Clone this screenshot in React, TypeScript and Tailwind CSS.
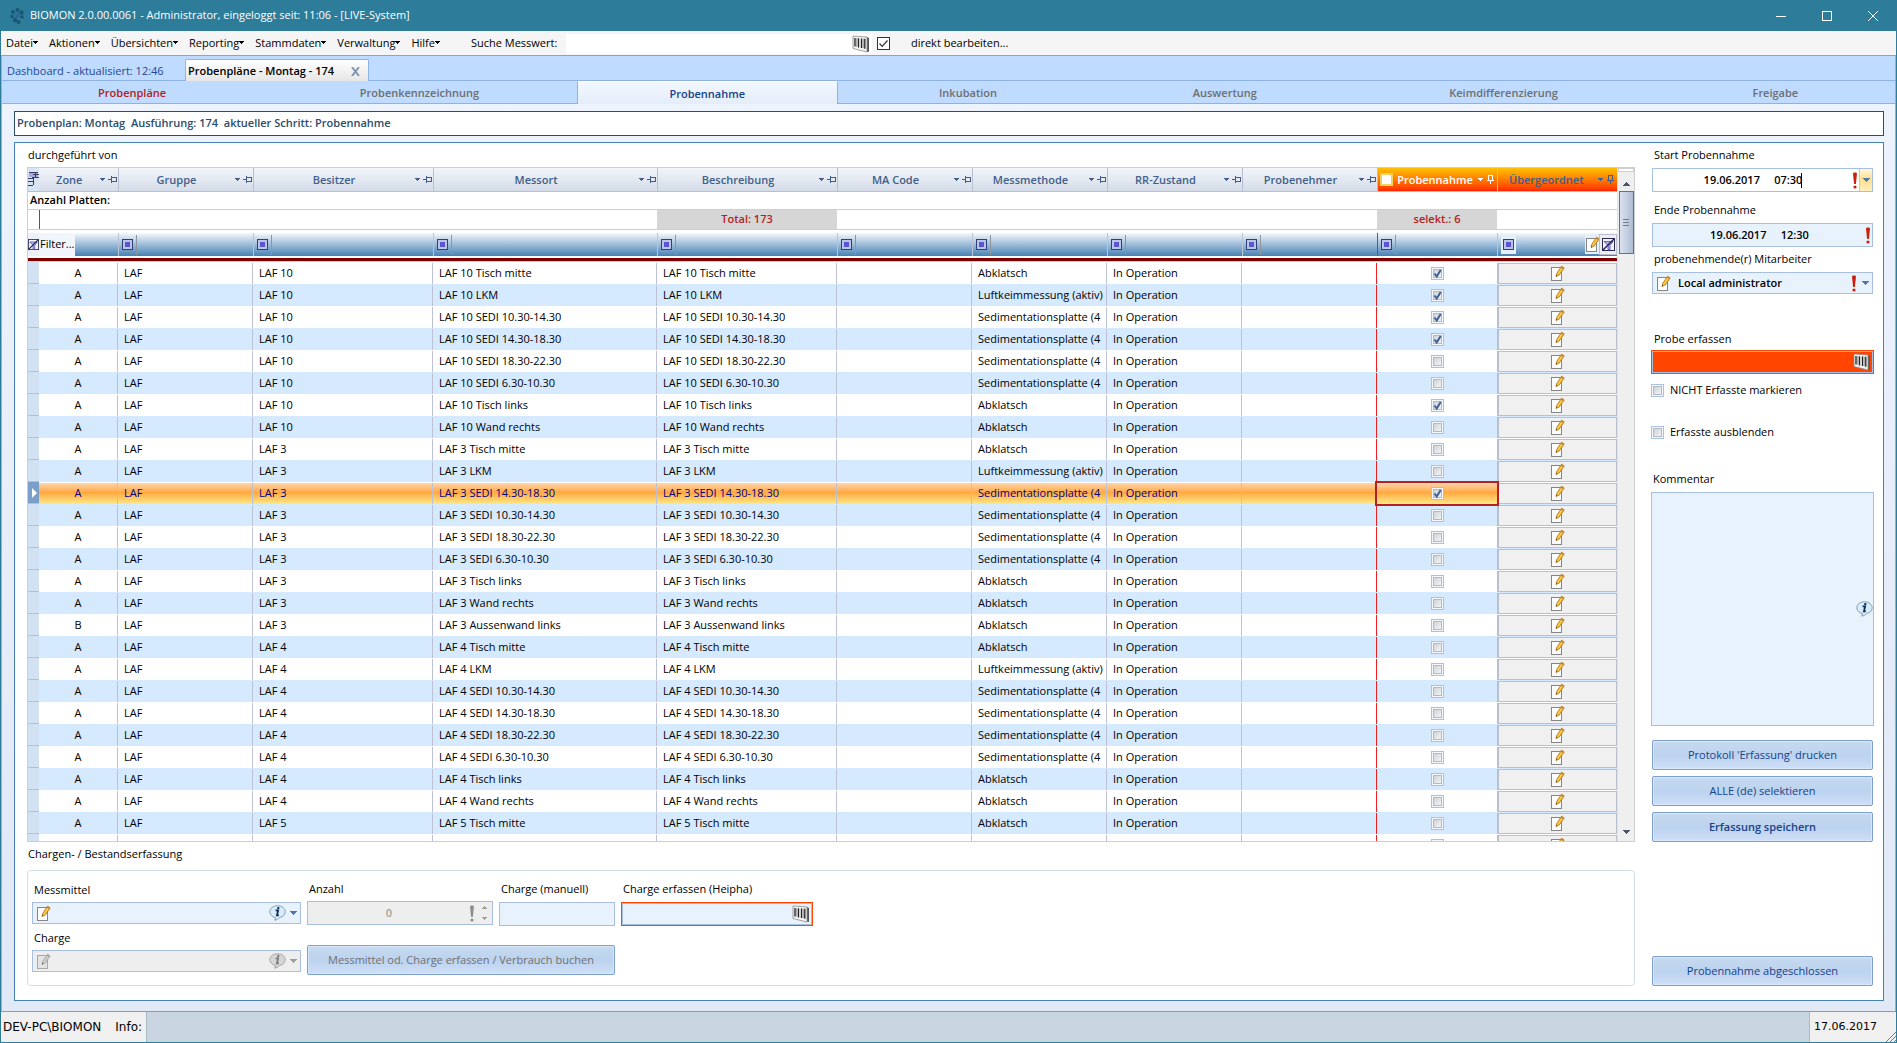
import React, { useState } from 'react';
import clsx from 'clsx';

type Sample = {
  zone: string;
  owner: string;
  place: string;
  method: string;
  checked?: boolean;
};

type StepTab = { label: string; tone: 'done' | 'active' | 'idle' };

const SEDI = 'Sedimentationsplatte (4';
const LKM = 'Luftkeimmessung (aktiv)';
const ABK = 'Abklatsch';

const samples: Sample[] = [
  { zone: 'A', owner: 'LAF 10', place: 'LAF 10 Tisch mitte', method: ABK, checked: true },
  { zone: 'A', owner: 'LAF 10', place: 'LAF 10 LKM', method: LKM, checked: true },
  { zone: 'A', owner: 'LAF 10', place: 'LAF 10 SEDI 10.30-14.30', method: SEDI, checked: true },
  { zone: 'A', owner: 'LAF 10', place: 'LAF 10 SEDI 14.30-18.30', method: SEDI, checked: true },
  { zone: 'A', owner: 'LAF 10', place: 'LAF 10 SEDI 18.30-22.30', method: SEDI },
  { zone: 'A', owner: 'LAF 10', place: 'LAF 10 SEDI 6.30-10.30', method: SEDI },
  { zone: 'A', owner: 'LAF 10', place: 'LAF 10 Tisch links', method: ABK, checked: true },
  { zone: 'A', owner: 'LAF 10', place: 'LAF 10 Wand rechts', method: ABK },
  { zone: 'A', owner: 'LAF 3', place: 'LAF 3 Tisch mitte', method: ABK },
  { zone: 'A', owner: 'LAF 3', place: 'LAF 3 LKM', method: LKM },
  { zone: 'A', owner: 'LAF 3', place: 'LAF 3 SEDI 14.30-18.30', method: SEDI, checked: true },
  { zone: 'A', owner: 'LAF 3', place: 'LAF 3 SEDI 10.30-14.30', method: SEDI },
  { zone: 'A', owner: 'LAF 3', place: 'LAF 3 SEDI 18.30-22.30', method: SEDI },
  { zone: 'A', owner: 'LAF 3', place: 'LAF 3 SEDI 6.30-10.30', method: SEDI },
  { zone: 'A', owner: 'LAF 3', place: 'LAF 3 Tisch links', method: ABK },
  { zone: 'A', owner: 'LAF 3', place: 'LAF 3 Wand rechts', method: ABK },
  { zone: 'B', owner: 'LAF 3', place: 'LAF 3 Aussenwand links', method: ABK },
  { zone: 'A', owner: 'LAF 4', place: 'LAF 4 Tisch mitte', method: ABK },
  { zone: 'A', owner: 'LAF 4', place: 'LAF 4 LKM', method: LKM },
  { zone: 'A', owner: 'LAF 4', place: 'LAF 4 SEDI 10.30-14.30', method: SEDI },
  { zone: 'A', owner: 'LAF 4', place: 'LAF 4 SEDI 14.30-18.30', method: SEDI },
  { zone: 'A', owner: 'LAF 4', place: 'LAF 4 SEDI 18.30-22.30', method: SEDI },
  { zone: 'A', owner: 'LAF 4', place: 'LAF 4 SEDI 6.30-10.30', method: SEDI },
  { zone: 'A', owner: 'LAF 4', place: 'LAF 4 Tisch links', method: ABK },
  { zone: 'A', owner: 'LAF 4', place: 'LAF 4 Wand rechts', method: ABK },
  { zone: 'A', owner: 'LAF 5', place: 'LAF 5 Tisch mitte', method: ABK },
];

const CURRENT_ROW = 10;

const menus = ['Datei', 'Aktionen', 'Übersichten', 'Reporting', 'Stammdaten', 'Verwaltung', 'Hilfe'];

const columns = ['Zone', 'Gruppe', 'Besitzer', 'Messort', 'Beschreibung', 'MA Code', 'Messmethode', 'RR-Zustand', 'Probenehmer'];

const steps: StepTab[] = [
  { label: 'Probenpläne', tone: 'done' },
  { label: 'Probenkennzeichnung', tone: 'idle' },
  { label: 'Probennahme', tone: 'active' },
  { label: 'Inkubation', tone: 'idle' },
  { label: 'Auswertung', tone: 'idle' },
  { label: 'Keimdifferenzierung', tone: 'idle' },
  { label: 'Freigabe', tone: 'idle' },
];

/* ---------- Icons ---------- */

function Caret({ className, up = false }: { className?: string; up?: boolean }) {
  return (
    <svg viewBox="0 0 8 4" className={clsx('shrink-0', className)} shapeRendering="crispEdges" aria-hidden="true">
      <path d={up ? 'M0 4h8L4 0z' : 'M0 0h8L4 4z'} fill="currentColor" />
    </svg>
  );
}

function PinIcon({ upright = false }: { upright?: boolean }) {
  return (
    <svg viewBox="0 0 9 9" className="h-[9px] w-[9px] shrink-0" fill="none" stroke="currentColor" shapeRendering="crispEdges" aria-hidden="true">
      {upright ? <path d="M2.5 0v5M6.5 0v5M2 .5h5M1 5.5h7M4.5 5v4" /> : <path d="M0 4.5h3M3.5 1v7M3.5 2.5h5M8.5 2v5M3.5 6.5h5" />}
    </svg>
  );
}

function EditIcon({ muted = false }: { muted?: boolean }) {
  return (
    <svg viewBox="0 0 15 17" className="h-[17px] w-[15px] shrink-0" aria-hidden="true">
      <rect x="1.5" y="2.5" width="10" height="13" fill={muted ? '#e4e4e4' : '#fdfdfd'} stroke={muted ? '#a8a8a8' : '#858585'} />
      <path d="M6 11.5l.8-3.2L11.6 1.2l2.6 1.7-4.9 7z" fill={muted ? '#cfcfcf' : '#fbc93d'} stroke={muted ? '#9b9b9b' : '#a86a10'} strokeWidth=".8" />
      <path d="M11.6 1.2l2.6 1.7-1 1.4-2.5-1.8z" fill={muted ? '#aaa' : '#c88a3a'} />
      <path d="M6 11.5l.3-1.4 1 .7z" fill="#444" />
    </svg>
  );
}

function BarcodeIcon() {
  return (
    <svg viewBox="0 0 18 18" className="h-[18px] w-[18px] shrink-0" aria-hidden="true">
      <path d="M15 2l2 1v14l-2-.5z" fill="#555" />
      <path d="M1 1l14 1v15L1 13.5z" fill="#f4f4f4" stroke="#8b8b8b" strokeWidth=".8" />
      <path d="M3 3v8.5M6.5 3.2v9.2M9.5 3.4v9.6M12.8 3.8v10" stroke="#222" strokeWidth="1.3" />
      <path d="M4.8 3.2v8.500M11.2 3.6v9.600" stroke="#777" strokeWidth=".8" />
    </svg>
  );
}

function InfoIcon({ muted = false }: { muted?: boolean }) {
  return (
    <svg viewBox="0 0 17 16" className="h-4 w-[17px] shrink-0" aria-hidden="true">
      <path
        d="M8.5 .8C4.2 .8 .8 3.4 .8 6.7c0 3.1 2.8 5.3 5.7 5.8L5.8 15.2c1.9-.4 3.6-1.3 4.9-2.7 3.4-.7 5.5-3 5.5-5.8C16.2 3.4 12.8 .8 8.5 .8z"
        fill={muted ? '#d6d6d6' : '#d4effb'}
        stroke={muted ? '#a0a0a0' : '#7d93a8'}
        strokeWidth=".9"
      />
      <path d="M6.6 5.4h2.500L8 10.4h1.8" fill="none" stroke={muted ? '#777' : '#17265a'} strokeWidth="1.8" />
      <circle cx="9.3" cy="3.1" r="1.2" fill={muted ? '#777' : '#17265a'} />
    </svg>
  );
}

function RequiredMark({ muted = false }: { muted?: boolean }) {
  return (
    <svg viewBox="0 0 4 17" className="h-[17px] w-1 shrink-0" aria-hidden="true">
      <path d="M0 1.5C0 0 4 0 4 1.5L2.9 12H1.1z" fill={muted ? '#8f8f8f' : '#c8210c'} />
      <circle cx="2" cy="15" r="1.6" fill={muted ? '#8f8f8f' : '#c8210c'} />
    </svg>
  );
}

function FilterClearIcon({ className }: { className: string }) {
  return (
    <svg viewBox="0 0 13 13" className={clsx('shrink-0', className)} fill="none" aria-hidden="true">
      <rect x=".5" y=".5" width="12" height="12" fill="#f4f4fb" stroke="#2a2a5c" />
      <path d="M2 3.5h9L8 7.5V12H6V7.5z" fill="#b3b0ee" stroke="#4a47a8" strokeWidth=".8" />
      <path d="M1 12L12 1" stroke="#1f1f4d" strokeWidth="1.4" />
    </svg>
  );
}

function ColumnChooserIcon() {
  return (
    <svg viewBox="0 0 11 14" className="h-[14px] w-[11px]" fill="none" shapeRendering="crispEdges" aria-hidden="true">
      <rect x="1" y="1" width="9" height="4" fill="#a9a7e6" />
      <path d="M1 .5h9M5 2.5h6M7.5 1v4M0 6.5h6M4 5.5h7M0 9.5h5M0 13.5h5M5.5 6v7" stroke="#3d3d5c" />
    </svg>
  );
}

function FilterMark() {
  return (
    <svg viewBox="0 0 11 11" className="h-[11px] w-[11px]" shapeRendering="crispEdges" aria-hidden="true">
      <rect x=".5" y=".5" width="10" height="10" fill="#b9c4e6" stroke="#2f3f77" />
      <rect x="3" y="3" width="5" height="5" fill="#5a55d0" />
    </svg>
  );
}

function AppLogo() {
  return (
    <svg viewBox="0 0 16 18" className="h-[18px] w-4 shrink-0" fill="#1c5577" aria-hidden="true">
      <circle cx="4" cy="5" r="2" />
      <circle cx="8.5" cy="3" r="2" />
      <circle cx="12.5" cy="5.5" r="2.2" />
      <circle cx="3" cy="9.5" r="1.8" />
      <circle cx="13" cy="10" r="1.8" />
      <circle cx="8.5" cy="8.5" r="2.6" fill="#2b6c94" />
      <circle cx="6" cy="13" r="2.2" />
      <circle cx="9.5" cy="15" r="2" />
    </svg>
  );
}

/* ---------- Controls ---------- */

function CheckBox({ id, label, checked, onChange }: { id?: string; label?: string; checked: boolean; onChange: () => void }) {
  return (
    <span className="relative inline-block h-[13px] w-[13px] shrink-0 align-middle">
      <input
        id={id}
        type="checkbox"
        aria-label={label}
        checked={checked}
        onChange={onChange}
        className="block h-[13px] w-[13px] appearance-none border border-[#a9c2e2] bg-linear-to-br from-[#c4c8ce] to-white shadow-[inset_0_0_0_1px_#f4f7fb,inset_0_0_0_2px_#b4b9c2]"
      />
      {checked && (
        <svg viewBox="0 0 13 13" className="pointer-events-none absolute inset-0 h-[13px] w-[13px]" aria-hidden="true">
          <path d="M3.5 6.5L5.7 9.5L9.7 3" fill="none" stroke="#3f5f96" strokeWidth="2" />
        </svg>
      )}
    </span>
  );
}

function ActionButton({ children, bold, disabled }: { children: React.ReactNode; bold?: boolean; disabled?: boolean }) {
  return (
    <button
      type="button"
      disabled={disabled}
      className={clsx(
        'h-[30px] w-full rounded-[2px] border border-[#7d9fd0] bg-linear-to-b from-[#c6dbf0] from-0% via-[#bcd2ee] via-50% to-[#cfe0f8] text-[11px] shadow-[inset_0_0_0_1px_#d8e8fa]',
        bold && 'font-semibold',
        disabled ? 'text-[#6f7072]' : 'text-[#15428b]',
      )}
    >
      {children}
    </button>
  );
}

function HeaderLabel({ children }: { children: React.ReactNode }) {
  return (
    <div className="flex h-[22px] items-center pt-px pr-px">
      <span className="flex-1 text-center">{children}</span>
      <span className="flex items-center gap-[3px]">
        <Caret className="h-[3px] w-[5px]" />
        <PinIcon />
      </span>
    </div>
  );
}

function SampleGrid() {
  const [picked, setPicked] = useState(() => samples.map(s => Boolean(s.checked)));

  const toggle = (index: number) => {
    setPicked(picked.map((value, i) => (i === index ? !value : value)));
  };

  return (
    <div className="flex min-h-0 flex-1 overflow-hidden border border-[#cfcfcf]">
      <div className="min-w-0 flex-1 overflow-hidden">
        <table className="w-full table-fixed">
          <colgroup>
            <col className="w-[11px]" />
            <col className="w-[79px]" />
            <col className="w-[135px]" />
            <col className="w-[180px]" />
            <col />
            <col className="w-[180px]" />
            <col className="w-[135px]" />
            <col className="w-[135px]" />
            <col className="w-[135px]" />
            <col className="w-[135px]" />
            <col className="w-[120px]" />
            <col className="w-[120px]" />
          </colgroup>
          <thead>
            <tr className="h-[23px] bg-linear-to-b from-[#f2f5fa] to-[#d5dce9] text-[#3f5f8a]">
              <th className="border-b border-[#b9bfcf] bg-[#d6e4f4] p-0">
                <ColumnChooserIcon />
              </th>
              {columns.map(name => (
                <th key={name} className="border-r border-b border-[#b9bfcf] p-0 font-semibold">
                  <HeaderLabel>{name}</HeaderLabel>
                </th>
              ))}
              <th className="border-r border-b border-[#b9bfcf] bg-linear-to-b from-[#ffc000] via-[#ff7a00] to-[#ff2000] p-0 font-semibold text-white">
                <div className="flex h-[22px] items-center gap-[3px] px-[2px] pt-px">
                  <input type="checkbox" aria-label="Alle Probennahmen" className="h-[13px] w-[13px] shrink-0 appearance-none border-2 border-[#f5d060] bg-white" />
                  <span className="flex-1 text-center">Probennahme</span>
                  <Caret className="h-[3px] w-[5px]" />
                  <PinIcon upright />
                </div>
              </th>
              <th className="border-b border-[#b9bfcf] bg-linear-to-b from-[#ffc000] via-[#ff7a00] to-[#ff2000] p-0 font-semibold">
                <div className="flex h-[22px] items-center gap-[3px] pt-px pr-[2px]">
                  <span className="flex-1 text-center">Übergeordnet</span>
                  <Caret className="h-[3px] w-[5px]" />
                  <PinIcon upright />
                </div>
              </th>
            </tr>
            <tr className="h-[18px]">
              <td colSpan={12} className="border-b border-[#cfcfcf] px-[2px] py-0 leading-[16px] font-semibold">
                Anzahl Platten:
              </td>
            </tr>
            <tr className="h-5 leading-[16px] font-semibold text-[#b22222]">
              <td className="border-r border-b border-r-[#e02020] border-b-[#cfcfcf] p-0" />
              <td colSpan={4} className="border-b border-[#cfcfcf] p-0" />
              <td className="border-b border-[#cfcfcf] bg-[#d6d6d6] p-0 text-center">Total: 173</td>
              <td colSpan={4} className="border-b border-[#cfcfcf] p-0" />
              <td className="border-b border-[#cfcfcf] bg-[#d6d6d6] p-0 text-center">selekt.: 6</td>
              <td className="border-b border-[#cfcfcf] p-0" />
            </tr>
            <tr className="h-1">
              <td colSpan={12} className="p-0" />
            </tr>
            <tr className="h-[23px] bg-linear-to-b from-[#f4f9fd] to-[#4682b4]">
              <td className="bg-[#eef0f8] p-0">
                <FilterClearIcon className="h-[13px] w-[11px]" />
              </td>
              <td className="border-r border-[#b9c4d6] p-0">
                <div className="h-[23px] w-9 bg-[#f1f6fc] pl-px leading-[21px]">Filter...</div>
              </td>
              {columns.slice(1).map(name => (
                <td key={name} className={clsx('border-r p-0', name === 'Probenehmer' ? 'border-[#f02020]' : 'border-[#b9c4d6]')}>
                  <div className="grid h-5 w-[18px] place-items-center border-r border-[#8f969e]">
                    <FilterMark />
                  </div>
                </td>
              ))}
              <td className="border-r border-[#b9c4d6] p-0">
                <div className="grid h-5 w-[18px] place-items-center border-r border-[#8f969e]">
                  <FilterMark />
                </div>
              </td>
              <td className="p-0">
                <div className="flex h-[21px] items-center pl-[3px]">
                  <span className="mr-auto grid h-[19px] w-[15px] place-items-center bg-[#e6f0fb]">
                    <FilterMark />
                  </span>
                  <span className="grid h-[19px] w-[14px] place-items-center overflow-hidden bg-[#e6f0fb]">
                    <EditIcon />
                  </span>
                  <button type="button" aria-label="Filter löschen" className="grid h-[21px] w-[18px] place-items-center border border-[#b9bfcf] bg-[#efefef]">
                    <FilterClearIcon className="h-[13px] w-[13px]" />
                  </button>
                </div>
              </td>
            </tr>
            <tr className="h-[2px]">
              <td colSpan={12} className="p-0" />
            </tr>
            <tr className="h-[3px]">
              <td colSpan={12} className="border-b border-[#cfcfcf] bg-[#7b0000] p-0" />
            </tr>
          </thead>
          <tbody>
            {samples.map((s, i) => {
              const current = i === CURRENT_ROW;
              const cell = clsx(
                'h-[21px] overflow-hidden border-r border-[#bcc2d4] leading-[20px] whitespace-nowrap',
                current && 'bg-linear-to-b from-[#ffd5a8] from-0% via-[#ffa940] via-45% to-[#ffe884] text-[#000080]',
              );
              return (
                <tr key={s.place} className={clsx('h-[22px]', i % 2 === 1 ? 'bg-[#d5e9ff]' : 'bg-white')}>
                  <td className={clsx('border-t border-[#b9bfcf] p-0', current ? 'bg-[#7b9fcb]' : 'bg-[#d3e2f3]')}>
                    {current && (
                      <svg viewBox="0 0 5 10" className="ml-[4px] h-[10px] w-[5px]" aria-hidden="true">
                        <path d="M0 0l5 5-5 5z" fill="#fff" />
                      </svg>
                    )}
                  </td>
                  <td className="p-0 pt-px">
                    <div className={clsx(cell, 'text-center')}>{s.zone}</div>
                  </td>
                  <td className="p-0 pt-px">
                    <div className={clsx(cell, 'pl-[6px]')}>LAF</div>
                  </td>
                  <td className="p-0 pt-px">
                    <div className={clsx(cell, 'pl-[6px]')}>{s.owner}</div>
                  </td>
                  <td className="p-0 pt-px">
                    <div className={clsx(cell, 'pl-[6px]')}>{s.place}</div>
                  </td>
                  <td className="p-0 pt-px">
                    <div className={clsx(cell, 'pl-[6px]')}>{s.place}</div>
                  </td>
                  <td className="p-0 pt-px">
                    <div className={cell} />
                  </td>
                  <td className="p-0 pt-px">
                    <div className={clsx(cell, 'pl-[6px]')}>{s.method}</div>
                  </td>
                  <td className="p-0 pt-px">
                    <div className={clsx(cell, 'pl-[6px]')}>In Operation</div>
                  </td>
                  <td className="p-0 pt-px">
                    <div className={clsx(cell, 'border-r-[#f02020]')} />
                  </td>
                  <td className="p-0 pt-px">
                    <div
                      className={clsx(
                        'flex h-[21px] items-center justify-center',
                        current && 'bg-linear-to-b from-[#ffd5a8] from-0% via-[#ffa940] via-45% to-[#ffe884] outline-2 outline-[#b22222]',
                      )}
                    >
                      <CheckBox label={`${s.place} erfasst`} checked={picked[i]} onChange={() => toggle(i)} />
                    </div>
                  </td>
                  <td className="p-0 pt-px">
                    <button type="button" aria-label={`${s.place} bearbeiten`} className="grid h-[21px] w-full place-items-center border border-l-2 border-[#b9bfcf] bg-[#f0f0f0]">
                      <EditIcon />
                    </button>
                  </td>
                </tr>
              );
            })}
            {/* next record, cut off by the viewport */}
            <tr className="h-[22px]">
              <td className="border-t border-[#b9bfcf] bg-[#d3e2f3] p-0" />
              {columns.map(name => (
                <td key={name} className="p-0 pt-px">
                  <div className={clsx('h-[21px] border-r', name === 'Probenehmer' ? 'border-[#f02020]' : 'border-[#bcc2d4]')} />
                </td>
              ))}
              <td className="p-0 pt-px">
                <div className="flex h-[21px] items-center justify-center">
                  <CheckBox label="Nächste Probe" checked={false} onChange={() => undefined} />
                </div>
              </td>
              <td className="p-0 pt-px">
                <div className="grid h-[21px] place-items-center border border-l-2 border-[#b9bfcf] bg-[#f0f0f0]">
                  <EditIcon />
                </div>
              </td>
            </tr>
          </tbody>
        </table>
      </div>

      {/* Scrollbar */}
      <div className="flex w-[17px] flex-col items-center border-l border-[#e2e2e2] bg-[#efefef]">
        <div className="h-1 w-full border border-[#cfcfcf] bg-white" />
        <div className="flex h-[19px] items-center pt-1 text-[#44546e]">
          <Caret up className="h-1 w-[7px]" />
        </div>
        <div className="flex h-[63px] w-[15px] flex-col items-center justify-center gap-[2px] border border-[#5c7399] bg-linear-to-r from-[#d9e2f0] via-[#c5d0e2] to-[#adbcd3]">
          <div className="h-px w-[6px] bg-[#6f7f96]" />
          <div className="h-px w-[6px] bg-[#6f7f96]" />
          <div className="h-px w-[6px] bg-[#6f7f96]" />
        </div>
        <div className="mt-auto pb-[7px] text-[#44546e]">
          <Caret className="h-1 w-[7px]" />
        </div>
      </div>
    </div>
  );
}

function ChargePanel() {
  return (
    <div className="mt-[7px] flex h-[116px] items-start gap-[6px] rounded-[4px] border border-[#d3dfe8] px-1 pt-[10px]">
      <div className="w-[269px]">
        <label htmlFor="messmittel" className="block h-[21px] pl-[2px] leading-[18px]">
          Messmittel
        </label>
        <div className="flex h-[22px] items-center border border-[#a9bfe0] bg-[#e8f2fd] pr-[3px] pl-[3px] text-[#4a78b5]">
          <EditIcon />
          <select id="messmittel" className="h-full min-w-0 flex-1 appearance-none bg-transparent" />
          <InfoIcon />
          <Caret className="ml-1 h-1 w-[7px]" />
        </div>
        <label htmlFor="charge" className="mt-[5px] block h-[21px] pl-[2px] leading-[18px]">
          Charge
        </label>
        <div className="flex h-[22px] items-center border border-[#a9bfe0] bg-[#eeeeee] pr-[3px] pl-[3px] text-[#a19f94]">
          <EditIcon muted />
          <select id="charge" disabled className="h-full min-w-0 flex-1 appearance-none bg-transparent" />
          <InfoIcon muted />
          <Caret className="ml-1 h-1 w-[7px]" />
        </div>
      </div>

      <div className="w-[308px]">
        <div className="flex gap-[6px]">
          <div className="w-[186px]">
            <label htmlFor="anzahl" className="block h-5 pl-[2px] leading-[16px]">
              Anzahl
            </label>
            <div className="flex h-6 items-center border border-[#a9bfe0] bg-[#eeeeee] pr-[5px] text-[#a19f94]">
              <input id="anzahl" defaultValue="0" disabled className="min-w-0 flex-1 bg-transparent text-center font-semibold" />
              <RequiredMark muted />
              <span className="ml-[7px] flex flex-col gap-2">
                <Caret up className="h-[3px] w-[6px]" />
                <Caret className="h-[3px] w-[6px]" />
              </span>
            </div>
          </div>
          <div className="flex-1">
            <label htmlFor="charge-manuell" className="block h-[21px] pl-[2px] leading-[16px]">
              Charge (manuell)
            </label>
            <input id="charge-manuell" className="h-6 w-full border border-[#a9bfe0] bg-[#e8f2fd] px-1" />
          </div>
        </div>
        <div className="mt-[19px]">
          <ActionButton disabled>Messmittel od. Charge erfassen / Verbrauch buchen</ActionButton>
        </div>
      </div>

      <div className="w-[192px]">
        <label htmlFor="charge-heipha" className="block h-[21px] pl-[2px] leading-[16px]">
          Charge erfassen (Heipha)
        </label>
        <div className="flex h-6 items-center border border-[#ff4500] bg-[#e8f2fd] pr-[2px] shadow-[inset_0_0_0_1px_#a9bfe0]">
          <input id="charge-heipha" className="h-full min-w-0 flex-1 bg-transparent px-1" />
          <BarcodeIcon />
        </div>
      </div>
    </div>
  );
}

function SidePanel() {
  const [markMissing, setMarkMissing] = useState(false);
  const [hideDone, setHideDone] = useState(false);

  return (
    <aside className="flex w-[223px] shrink-0 flex-col">
      <label htmlFor="start" className="block h-[22px] pl-[3px] leading-[18px]">
        Start Probennahme
      </label>
      <div className="relative mx-px flex h-6 items-center border border-[#a9bfe0] bg-white font-semibold">
        <input id="start" defaultValue="19.06.2017     07:30" className="min-w-0 flex-1 text-center" />
        <span className="absolute top-1 left-[148px] h-[15px] w-px bg-black" />
        <RequiredMark />
        <button type="button" aria-label="Kalender öffnen" className="ml-[2px] grid h-[22px] w-[13px] place-items-center border-l border-[#d9c98a] bg-linear-to-b from-[#fff6d6] via-[#ffdf8e] to-[#fff0c0] text-[#4a78b5]">
          <Caret className="h-1 w-[7px]" />
        </button>
      </div>

      <label htmlFor="ende" className="mt-[9px] block h-[22px] pl-[3px] leading-[18px]">
        Ende Probennahme
      </label>
      <div className="mx-px flex h-6 items-center border border-[#a9bfe0] bg-[#e8f2fd] pr-[2px] font-semibold">
        <input id="ende" defaultValue="19.06.2017     12:30" className="min-w-0 flex-1 bg-transparent text-center" />
        <RequiredMark />
      </div>

      <label htmlFor="mitarbeiter" className="mt-[3px] block h-[22px] pl-[3px] leading-[18px]">
        probenehmende(r) Mitarbeiter
      </label>
      <div className="mx-px flex h-[22px] items-center border border-[#a9bfe0] bg-[#e8f2fd] pr-[3px] pl-[3px] text-[#4a78b5]">
        <EditIcon />
        <select id="mitarbeiter" className="min-w-0 flex-1 appearance-none bg-transparent pl-[7px] font-semibold text-black">
          <option>Local administrator</option>
        </select>
        <RequiredMark />
        <Caret className="ml-[6px] h-1 w-[7px]" />
      </div>

      <label htmlFor="probe" className="mt-9 block h-5 pl-[3px] leading-[18px]">
        Probe erfassen
      </label>
      <div className="flex h-6 items-center border border-[#ff4500] bg-[#ff4500] pr-[2px] shadow-[inset_0_0_0_1px_#a9bfe0]">
        <input id="probe" className="min-w-0 flex-1 bg-transparent px-1" />
        <BarcodeIcon />
      </div>

      <div className="mt-2 flex h-4 items-center gap-[6px]">
        <CheckBox id="mark-missing" checked={markMissing} onChange={() => setMarkMissing(!markMissing)} />
        <label htmlFor="mark-missing">NICHT Erfasste markieren</label>
      </div>
      <div className="mt-[26px] flex h-4 items-center gap-[6px]">
        <CheckBox id="hide-done" checked={hideDone} onChange={() => setHideDone(!hideDone)} />
        <label htmlFor="hide-done">Erfasste ausblenden</label>
      </div>

      <label htmlFor="kommentar" className="mt-[30px] block h-[22px] pl-[2px] leading-[18px]">
        Kommentar
      </label>
      <div className="relative h-[234px]">
        <textarea id="kommentar" className="block h-full w-full resize-none border border-[#a9bfe0] bg-[#e8f2fd] p-1" />
        <span className="absolute top-1/2 right-px -translate-y-1/2">
          <InfoIcon />
        </span>
      </div>

      <div className="mx-px mt-[14px] flex flex-1 flex-col gap-[6px] pb-[14px]">
        <ActionButton>Protokoll 'Erfassung' drucken</ActionButton>
        <ActionButton>ALLE (de) selektieren</ActionButton>
        <ActionButton bold>Erfassung speichern</ActionButton>
        <div className="mt-auto">
          <ActionButton>Probennahme abgeschlossen</ActionButton>
        </div>
      </div>
    </aside>
  );
}

export default function App() {
  const [directEdit, setDirectEdit] = useState(true);

  return (
    <div className="flex h-screen flex-col overflow-hidden border-x border-b border-[#2d7c9a] bg-[#f5f5f5] font-['Open_Sans','Noto_Sans',sans-serif] text-[11px] text-black">
      {/* Title bar */}
      <header className="flex h-[31px] shrink-0 items-center bg-[#2d7c9a] pl-2 text-white">
        <AppLogo />
        <h1 className="ml-[5px]">BIOMON 2.0.00.0061 - Administrator, eingeloggt seit: 11:06 - [LIVE-System]</h1>
        <div className="ml-auto flex">
          <button type="button" aria-label="Minimieren" className="grid h-[30px] w-[46px] place-items-center">
            <svg viewBox="0 0 10 10" className="h-[10px] w-[10px]" stroke="#fff" shapeRendering="crispEdges">
              <path d="M0 5.5h10" />
            </svg>
          </button>
          <button type="button" aria-label="Maximieren" className="grid h-[30px] w-[46px] place-items-center">
            <svg viewBox="0 0 10 10" className="h-[10px] w-[10px]" fill="none" stroke="#fff" shapeRendering="crispEdges">
              <rect x=".5" y=".5" width="9" height="9" />
            </svg>
          </button>
          <button type="button" aria-label="Schließen" className="grid h-[30px] w-[46px] place-items-center">
            <svg viewBox="0 0 10 10" className="h-[10px] w-[10px]" stroke="#fff">
              <path d="M0 0l10 10M10 0L0 10" />
            </svg>
          </button>
        </div>
      </header>

      {/* Menu bar */}
      <div className="flex h-[25px] shrink-0 items-center border-b border-[#a0a0a0] pt-px pl-[5px]">
        <nav className="flex gap-[11px]">
          {menus.map(menu => (
            <button key={menu} type="button" className="flex items-center">
              {menu}
              <Caret className="mb-[3px] h-[3px] w-[5px]" />
            </button>
          ))}
        </nav>
        <label htmlFor="suche" className="ml-[31px] w-[95px]">
          Suche Messwert:
        </label>
        <div className="flex h-5 w-[306px] items-center bg-white pr-[2px]">
          <input id="suche" className="min-w-0 flex-1 px-1" />
          <BarcodeIcon />
        </div>
        <label className="ml-[5px] flex items-center gap-[21px]">
          <span className="relative inline-block h-[13px] w-[13px]">
            <input
              type="checkbox"
              checked={directEdit}
              onChange={() => setDirectEdit(!directEdit)}
              className="block h-[13px] w-[13px] appearance-none border border-[#333] bg-white"
            />
            {directEdit && (
              <svg viewBox="0 0 13 13" className="pointer-events-none absolute inset-0" fill="none" stroke="#333" strokeWidth="1.2">
                <path d="M2.5 6.5l2.7 2.8L10.5 3.5" />
              </svg>
            )}
          </span>
          direkt bearbeiten...
        </label>
      </div>

      <div className="flex min-h-0 flex-1 flex-col border-x border-[#8db2e3] bg-linear-to-b from-[#edf4fe] to-[#e1e8f6]">
        {/* Document tabs */}
        <div className="flex h-[25px] shrink-0 items-end border-b border-[#8db2e3] bg-[#bfdbff] pl-[5px]">
          <a href="#dashboard" className="w-[178px] leading-[18px] text-[#1e4695]">
            Dashboard - aktualisiert: 12:46
          </a>
          <div className="-mb-px flex h-[22px] w-[184px] items-center justify-between rounded-t-[2px] border border-b-0 border-[#8db2e3] bg-linear-to-b from-white to-[#e6e6e6] pt-px pr-2 pl-[2px]">
            <span className="font-semibold whitespace-nowrap">Probenpläne - Montag - 174</span>
            <button type="button" aria-label="Tab schließen">
              <svg viewBox="0 0 9 9" className="h-[9px] w-[9px]" stroke="#8296b4" strokeWidth="2">
                <path d="M1 0l7 9M8 0L1 9" />
              </svg>
            </button>
          </div>
        </div>

        {/* Process steps */}
        <nav className="grid h-[23px] shrink-0 grid-cols-[260fr_314fr_261fr_260fr_253fr_304fr_239fr] border-b border-[#8db2e3] bg-[#bfdbff] font-semibold">
          {steps.map(step => (
            <a
              key={step.label}
              href={`#${step.label}`}
              className={clsx(
                'flex items-center justify-center pt-[2px]',
                step.tone === 'done' && 'text-[#b22222]',
                step.tone === 'idle' && 'text-[#6e6e6e]',
                step.tone === 'active' && '-mb-px rounded-t-[2px] border-x border-t border-x-[#8db2e3] border-t-white bg-linear-to-b from-[#f3f8ff] to-[#e4edf9] text-[#15428b]',
              )}
            >
              {step.label}
            </a>
          ))}
        </nav>

        <main className="flex min-h-0 flex-1 flex-col gap-[6px] pt-[7px] pr-[11px] pb-[10px] pl-3">
          <h2 className="flex h-[25px] shrink-0 items-center border border-[#2b4c6b] bg-white pl-[2px] font-semibold whitespace-pre text-[#2b4c6b]">
            {'Probenplan: Montag  Ausführung: 174  aktueller Schritt: Probennahme'}
          </h2>

          <section className="flex min-h-0 flex-1 gap-4 border border-[#4682b4] bg-white pt-[3px] pr-[9px] pl-3">
            <div className="flex min-w-0 flex-1 flex-col pb-[14px]">
              <p className="h-[21px] shrink-0 pl-px leading-[18px]">durchgeführt von</p>
              <SampleGrid />
              <p className="mt-[3px] h-[18px] shrink-0 pl-px leading-[18px]">Chargen- / Bestandserfassung</p>
              <ChargePanel />
            </div>
            <SidePanel />
          </section>
        </main>
      </div>

      {/* Status bar */}
      <footer className="flex h-[31px] shrink-0 border-t border-[#8f9aa5] bg-[#c9d6e1] font-['DejaVu_Sans',sans-serif]">
        <div className="flex w-[146px] items-center gap-[14px] border-r border-[#a9bac8] bg-[#f0f0f0] pl-[2px] text-[12px] whitespace-nowrap">
          <span>DEV-PC\BIOMON</span>
          <span>Info:</span>
        </div>
        <div className="ml-auto flex w-[87px] items-center border-l border-[#a9bac8] bg-[#f0f0f0] pl-1">
          <span className="flex-1">17.06.2017</span>
          <svg viewBox="0 0 10 10" className="h-[10px] w-[10px] self-end" stroke="#7d7d7d">
            <path d="M0 10L10 0M4 10l6-6M8 10l2-2" />
          </svg>
        </div>
      </footer>
    </div>
  );
}
